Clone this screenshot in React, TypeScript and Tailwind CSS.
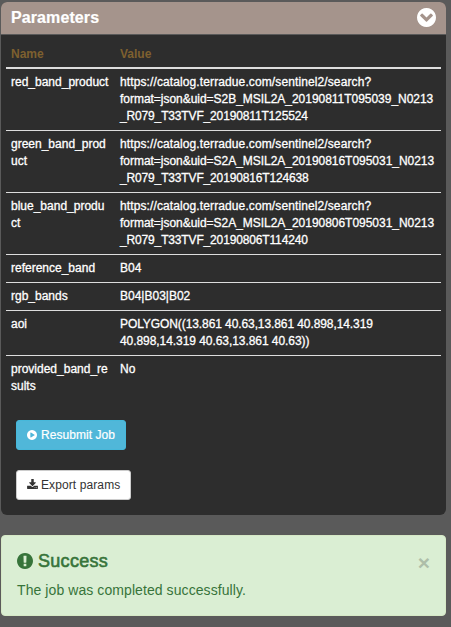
import React from "react";

const DISC =
  "M896 128q209 0 385.5 103t279.5 279.5 103 385.5-103 385.5-279.5 279.5-385.5 103-385.5-103-279.5-279.5-103-385.5 103-385.5 279.5-279.5 385.5-103z";

const icons = {
  chevron:
    DISC +
    "M941 1229l454-454q19-19 19-45t-19-45l-102-102q-19-19-45-19t-45 19l-307 307-307-307q-19-19-45-19t-45 19l-102 102q-19 19-19 45t19 45l454 454q19 19 45 19t45-19z",
  play:
    DISC +
    "M1280 951q32-18 32-55t-32-55l-544-320q-31-19-64-1-32 19-32 56v640q0 37 32 56 16 8 32 8 17 0 32-9z",
  exclamation:
    DISC +
    "M1024 1375v-190q0-14-9-23.5t-22-9.5h-192q-13 0-23 10t-10 23v190q0 13 10 23t23 10h192q13 0 22-9.5t9-23.5zM1022 1031l18-621q0-12-10-18-10-8-24-8h-220q-14 0-24 8-10 6-10 18l17 621q0 10 10 17.5t24 7.5h185q14 0 23.5-7.5t10.5-17.5z",
  download:
    "M1344 1344q0-26-19-45t-45-19-45 19-19 45 19 45 45 19 45-19 19-45zm256 0q0-26-19-45t-45-19-45 19-19 45 19 45 45 19 45-19 19-45zm128-224v320q0 40-28 68t-68 28h-1472q-40 0-68-28t-28-68v-320q0-40 28-68t68-28h465l135 136q58 56 136 56t136-56l136-136h464q40 0 68 28t28 68zm-325-569q17 41-14 70l-448 448q-18 19-45 19t-45-19l-448-448q-31-29-14-70 17-39 59-39h256v-448q0-26 19-45t45-19h256q26 0 45 19t19 45v448h256q42 0 59 39z",
};

function Icon({ name, box, className }: { name: keyof typeof icons; box: string; className: string }) {
  return (
    <svg viewBox={box} className={className} fill="currentColor" fillRule="evenodd" aria-hidden="true">
      <path d={icons[name]} />
    </svg>
  );
}

const ROUND = "128 128 1536 1536";

const URL_TRACKING = ["tracking-[0.11px]", "tracking-[-0.03px]", "tracking-[-0.15px]"];

const rows: { name: string[]; value: string[]; tracking?: string[] }[] = [
  {
    name: ["red_band_product"],
    value: ["https://catalog.terradue.com/sentinel2/search?", "format=json&uid=S2B_MSIL2A_20190811T095039_N0213", "_R079_T33TVF_20190811T125524"],
    tracking: URL_TRACKING,
  },
  {
    name: ["green_band_prod", "uct"],
    value: ["https://catalog.terradue.com/sentinel2/search?", "format=json&uid=S2A_MSIL2A_20190816T095031_N0213", "_R079_T33TVF_20190816T124638"],
    tracking: URL_TRACKING,
  },
  {
    name: ["blue_band_produ", "ct"],
    value: ["https://catalog.terradue.com/sentinel2/search?", "format=json&uid=S2A_MSIL2A_20190806T095031_N0213", "_R079_T33TVF_20190806T114240"],
    tracking: URL_TRACKING,
  },
  { name: ["reference_band"], value: ["B04"] },
  { name: ["rgb_bands"], value: ["B04|B03|B02"] },
  {
    name: ["aoi"],
    value: ["POLYGON((13.861 40.63,13.861 40.898,14.319", "40.898,14.319 40.63,13.861 40.63))"],
    tracking: ["tracking-[-0.09px]", "tracking-[-0.06px]"],
  },
  { name: ["provided_band_re", "sults"], value: ["No"] },
];

function Lines({ lines, tracking = [] }: { lines: string[]; tracking?: string[] }) {
  return (
    <>
      {lines.map((line, i) => (
        <div key={line} className={`whitespace-nowrap ${tracking[i] ?? ""}`}>
          {line}
        </div>
      ))}
    </>
  );
}

export default function App() {
  return (
    <div className="h-[627px] w-[451px] overflow-hidden bg-[#5a5a5a] pt-0.5 pr-[5px] pl-px font-['Liberation_Sans',Arial,sans-serif]">
      <section className="h-[513px] overflow-hidden rounded-[6px] bg-[#2d2d2d]">
        <header className="flex h-[33px] items-center justify-between border-b border-[#5a5a5a] bg-[#a5948c] pr-2.5 pl-2.5 text-white">
          <h3 className="text-base leading-[18px] font-bold tracking-[0.1px] [-webkit-text-stroke:0.2px_white]">Parameters</h3>
          <button aria-label="Collapse" className="-mt-0.5">
            <Icon name="chevron" box={ROUND} className="block size-[19px]" />
          </button>
        </header>

        <div className="px-[5px]">
          <div className="grid h-[34px] grid-cols-[109px_1fr] border-b-2 border-[#ddd] px-[5px] pt-[11px] text-xs leading-[17px] font-bold text-[#7e602f]">
            <span>Name</span>
            <span>Value</span>
          </div>
          <div className="divide-y divide-[#ddd]">
            {rows.map((row) => (
              <div
                key={row.name[0]}
                className="grid grid-cols-[109px_1fr] px-[5px] py-[5px] text-xs leading-[17px] text-white [-webkit-text-stroke:0.3px_white]"
              >
                <div>
                  <Lines lines={row.name} />
                </div>
                <div>
                  <Lines lines={row.value} tracking={row.tracking} />
                </div>
              </div>
            ))}
          </div>
        </div>

        <div className="flex flex-col items-start gap-5 px-[15px] pt-5 text-xs leading-[18px]">
          <button className="flex h-[30px] w-[110px] items-center gap-1 rounded-[3px] border border-[#46b8da] bg-[#50b7d9] pl-2.5 whitespace-nowrap text-white [-webkit-text-stroke:0.2px_white]">
            <Icon name="play" box={ROUND} className="size-[10px] shrink-0" />
            <span className="tracking-[0.05px]">Resubmit Job</span>
          </button>
          <button className="flex h-[30px] w-[115px] items-center gap-[3px] rounded-[3px] border border-[#ccc] bg-white pl-2.5 whitespace-nowrap text-[#333]">
            <Icon name="download" box="64 0 1664 1536" className="-mt-0.5 h-[10px] w-[11px] shrink-0" />
            <span className="tracking-[0.1px]">Export params</span>
          </button>
        </div>
      </section>

      <section className="mt-5 flex h-[81px] justify-between rounded-[4px] border border-[#d6e9c6] bg-[#daeed3] px-[15px] text-[#37743a]">
        <div>
          <h4 className="mt-[15px] flex items-center gap-[5px] text-lg leading-5 font-medium tracking-[0.3px] [-webkit-text-stroke:0.6px_#37743a]">
            <Icon name="exclamation" box={ROUND} className="size-4" />
            Success
          </h4>
          <p className="mt-[9px] text-sm leading-5 tracking-[0.08px]">The job was completed successfully.</p>
        </div>
        <button aria-label="Close" className="mt-4 h-[21px] text-[21px] leading-[21px] font-bold text-[#aebea9]">
          ×
        </button>
      </section>
    </div>
  );
}
